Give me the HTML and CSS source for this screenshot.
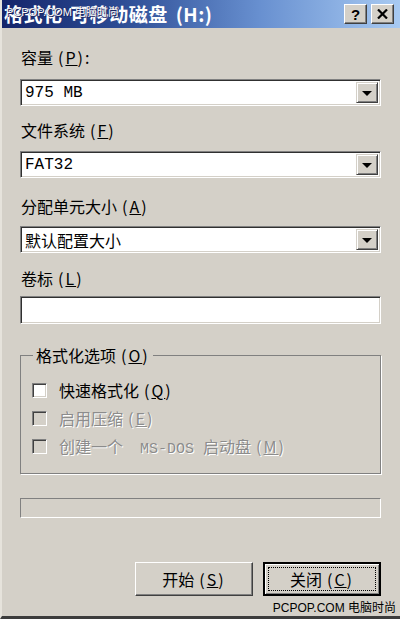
FILE: index.html
```html
<!DOCTYPE html>
<html lang="zh-CN">
<head>
<meta charset="utf-8">
<title>格式化 可移动磁盘 (H:)</title>
<link rel="stylesheet" href="styles.css">
</head>
<body>
<div class="window">
  <div class="titlebar">
    <span class="title">格式化 可移动磁盘 (H:)</span>
    <span class="stamp stamp-top">PCPOP.COM 电脑时尚</span>
    <div class="caption-buttons">
      <button class="cap-btn cap-help">?</button>
      <button class="cap-btn cap-close">
        <svg width="11" height="10" viewBox="0 0 11 10"><path d="M1 0.5 L10 9.5 M10 0.5 L1 9.5" stroke="#000" stroke-width="2.2" fill="none"/></svg>
      </button>
    </div>
  </div>

  <div class="content">
    <div class="field field-capacity">
      <div class="label">容量<span class="mn">(<u>P</u>)</span>:</div>
      <div class="combo"><span class="combo-text mono">975 MB</span><span class="combo-arrow"><i class="tri"></i></span></div>
    </div>
    <div class="field field-fs">
      <div class="label">文件系统<span class="mn">(<u>F</u>)</span></div>
      <div class="combo"><span class="combo-text mono">FAT32</span><span class="combo-arrow"><i class="tri"></i></span></div>
    </div>
    <div class="field field-alloc">
      <div class="label">分配单元大小<span class="mn">(<u>A</u>)</span></div>
      <div class="combo"><span class="combo-text">默认配置大小</span><span class="combo-arrow"><i class="tri"></i></span></div>
    </div>
    <div class="field field-volume">
      <div class="label">卷标<span class="mn">(<u>L</u>)</span></div>
      <div class="textbox"></div>
    </div>

    <fieldset class="group">
      <legend class="group-title">格式化选项<span class="mn">(<u>O</u>)</span></legend>
      <div class="check-row">
        <span class="check"></span><span class="check-label">快速格式化<span class="mn">(<u>Q</u>)</span></span>
      </div>
      <div class="check-row disabled">
        <span class="check"></span><span class="check-label">启用压缩<span class="mn">(<u>E</u>)</span></span>
      </div>
      <div class="check-row disabled">
        <span class="check"></span><span class="check-label">创建一个<span class="mono-sm">MS-DOS</span>启动盘<span class="mn">(<u>M</u>)</span></span>
      </div>
    </fieldset>

    <div class="progress"></div>

    <div class="actions">
      <button class="btn">开始<span class="mn">(<u>S</u>)</span></button>
      <button class="btn btn-default"><span class="focus">关闭<span class="mn">(<u>C</u>)</span></span></button>
    </div>
  </div>

  <span class="stamp stamp-bottom">PCPOP.COM 电脑时尚</span>
</div>
</body>
</html>
```

FILE: styles.css
```css
html, body {
  margin: 0;
  padding: 0;
  background: #d4d0c8;
}

.window {
  position: relative;
  width: 400px;
  height: 619px;
  box-sizing: border-box;
  background: #d4d0c8;
  border-left: 2px solid #e6e3dc;
  border-bottom: 3px solid #3c3c3c;
  font-family: "Noto Sans CJK SC", "DejaVu Sans", sans-serif;
  font-size: 16px;
  color: #000;
  overflow: hidden;
}

/* ---- caption bar ---- */
.titlebar {
  position: relative;
  height: 28px;
  margin-left: -2px;
  display: flex;
  align-items: center;
  padding-left: 4px;
  background: linear-gradient(to right, #14246a 0%, #2c4c94 30%, #6890d0 65%, #a8caf2 100%);
}

.title {
  color: #fff;
  font-weight: bold;
  font-size: 19px;
  letter-spacing: 0.5px;
  line-height: 28px;
  word-spacing: 3px;
}

.stamp {
  position: absolute;
  font-family: "Liberation Sans", "Noto Sans CJK SC", sans-serif;
  white-space: nowrap;
}

.stamp-top {
  left: 6px;
  top: 3px;
  font-size: 11px;
  color: #ffffff;
  text-shadow: 0 0 1px #1a2560, 1px 1px 0 #1a2560;
}

.stamp-bottom {
  right: 4px;
  bottom: 1px;
  font-size: 12px;
  color: #000;
}

.caption-buttons {
  margin-left: auto;
  margin-right: 6px;
  display: flex;
  gap: 4px;
}

.cap-btn {
  width: 23px;
  height: 20px;
  padding: 0;
  box-sizing: border-box;
  background: #d4d0c8;
  border: 1px solid;
  border-color: #fff #404040 #404040 #fff;
  box-shadow: inset -1px -1px 0 #808080;
  display: flex;
  align-items: center;
  justify-content: center;
  font-family: "Liberation Sans", sans-serif;
  font-weight: bold;
  font-size: 15px;
  color: #000;
}

/* ---- form ---- */
.content {
  display: flex;
  flex-direction: column;
  padding: 19px 19px 0 18px;
}

.field {
  display: flex;
  flex-direction: column;
}

.label {
  height: 20px;
  line-height: 20px;
  padding-left: 1px;
  white-space: nowrap;
}

/* mnemonic "(X)" suffix, drawn wider like the system font */
.mn {
  margin-left: 5px;
  letter-spacing: 2px;
}

.field-capacity .label { margin-bottom: 12px; }
.field-fs { margin-top: 14px; }
.field-fs .label { margin-bottom: 11px; }
.field-alloc { margin-top: 18px; }
.field-alloc .label { margin-bottom: 10px; }
.field-volume { margin-top: 15px; }
.field-volume .label { margin-bottom: 8px; }

.combo,
.textbox {
  box-sizing: border-box;
  background: #fff;
  border: 1px solid;
  border-color: #808080 #fff #fff #808080;
  box-shadow: inset 1px 1px 0 #303030, inset -1px -1px 0 #d4d0c8;
}

.combo {
  height: 27px;
  display: flex;
  align-items: center;
  padding: 2px;
}

.combo-text {
  flex: 1;
  padding-left: 2px;
  line-height: 22px;
  white-space: nowrap;
}

.mono {
  font-family: "Liberation Mono", monospace;
  font-size: 16px;
}

.combo-arrow {
  width: 22px;
  height: 21px;
  box-sizing: border-box;
  background: #d4d0c8;
  border: 1px solid;
  border-color: #d4d0c8 #404040 #404040 #d4d0c8;
  box-shadow: inset 1px 1px 0 #fff, inset -1px -1px 0 #808080;
  display: flex;
  align-items: center;
  justify-content: center;
}

.tri {
  width: 0;
  height: 0;
  border-left: 5px solid transparent;
  border-right: 5px solid transparent;
  border-top: 5px solid #000;
  margin-top: 1px;
}

.textbox {
  height: 28px;
}

/* ---- options group ---- */
.group {
  margin: 21px 0 0 0;
  padding: 0 10px 13px 11px;
  border: 1px solid #808080;
  box-shadow: 1px 1px 0 #fff;
  min-width: 0;
}

.group-title {
  padding: 0 3px;
  margin-left: 1px;
  height: 20px;
  line-height: 20px;
  margin-bottom: 11px;
}

.check-row {
  height: 28px;
  display: flex;
  align-items: center;
  white-space: nowrap;
}

.check {
  width: 15px;
  height: 15px;
  box-sizing: border-box;
  background: #fff;
  border: 1px solid;
  border-color: #808080 #fff #fff #808080;
  box-shadow: inset 1px 1px 0 #404040, inset -1px -1px 0 #d4d0c8;
  margin-right: 12px;
}

.check-row.disabled .check {
  background: #d4d0c8;
}

.check-row.disabled .check-label {
  color: #8c8c8c;
  text-shadow: 1px 1px 0 #fff;
}

.mono-sm {
  font-family: "Liberation Mono", monospace;
  font-size: 15px;
  margin: 0 9px 0 17px;
}

/* ---- progress ---- */
.progress {
  margin-top: 24px;
  height: 20px;
  box-sizing: border-box;
  border: 1px solid;
  border-color: #808080 #fff #fff #808080;
}

/* ---- buttons ---- */
.actions {
  margin-top: 44px;
  display: flex;
  justify-content: flex-end;
  gap: 10px;
}

.btn {
  width: 118px;
  height: 34px;
  box-sizing: border-box;
  padding: 0;
  background: #d4d0c8;
  border: 1px solid;
  border-color: #fff #404040 #404040 #fff;
  box-shadow: inset -1px -1px 0 #808080;
  font-family: "Noto Sans CJK SC", sans-serif;
  font-size: 16px;
  color: #000;
}

.btn-default {
  border: 2px solid #000;
  box-shadow: inset 1px 1px 0 #fff, inset -1px -1px 0 #808080;
  padding: 3px;
  display: flex;
}

.focus {
  flex: 1;
  display: flex;
  align-items: center;
  justify-content: center;
  border: 1px dotted #000;
}
```
